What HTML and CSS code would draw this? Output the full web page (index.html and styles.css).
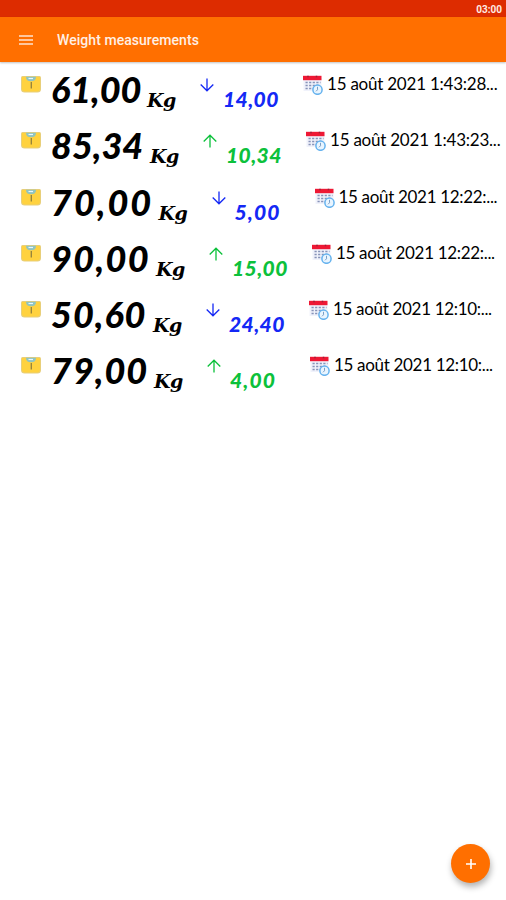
FILE: index.html
```
<!DOCTYPE html>
<html lang="en">
<head>
    <meta charset="UTF-8">
    <meta name="viewport" content="width=device-width, initial-scale=1.0">
    <title>Weight measurements</title>
    <link rel="stylesheet" href="styles.css">
</head>
<body>
    <svg class="sprite" aria-hidden="true">
        <symbol id="scale" viewBox="0 0 20 17">
            <path d="M1.500 0h17q1.500 0 1.500 1.500v11.500q0 3.500-3.500 3.500h-13Q0 16.500 0 13v-11.500Q0 0 1.500 0z" fill="#e8cf7a"/>
            <path d="M1 1h18v11.500q0 3-3 3h-12q-3 0-3-3z" fill="#ffd23f"/>
            <path d="M5 .8h10q0 4.500-5 4.500T5 .8z" fill="#8fc4c0"/>
            <path d="M7.500 2.500h4.500" stroke="#e8f6ff" stroke-width="1.200"/>
            <path d="M10.300 6v6.500" stroke="#92813d" stroke-width="1.300"/>
        </symbol>
        <symbol id="calendar" viewBox="0 0 20 20">
            <path d="M.5 3h18v13H.5z" fill="#f0f2fb"/>
            <path d="M0 .8h18.500v4.400H0z" fill="#ee1834"/>
            <path d="M5 .8v1.500M13.500 .8v1.500" stroke="#9b2038" stroke-width="1.500"/>
            <path d="M2.500 7.500h15M2.500 10.500h14M2.500 13.500h8" stroke="#8793b8" stroke-width="1.600" stroke-dasharray="2.200 1.400"/>
            <circle cx="14.500" cy="14.700" r="4.600" fill="#e9f5ff" stroke="#65b2ee" stroke-width="1.500"/>
            <path d="M14.500 11.800v3l-1.500 1.500" fill="none" stroke="#7a9ec5"/>
        </symbol>
        <symbol id="down" viewBox="0 0 14 14">
            <path d="M7 .5v12M.7 6.500L7 12.800l6.300-6.300" fill="none" stroke="currentColor" stroke-width="1.300"/>
        </symbol>
        <symbol id="up" viewBox="0 0 14 14">
            <path d="M7 13.500v-12M.7 7.500L7 1.200l6.300 6.300" fill="none" stroke="currentColor" stroke-width="1.300"/>
        </symbol>
    </svg>

    <div class="status">03:00</div>
    <header>
        <svg class="menu" viewBox="0 0 14 10"><path d="M0 1h14M0 5h14M0 9h14" stroke="#ffe3cf" stroke-width="1.700"/></svg>
        <h1>Weight measurements</h1>
    </header>

    <main>
        <div class="row first">
            <svg class="scale"><use href="#scale"/></svg>
            <span class="weight">61,00</span><span class="unit">Kg</span>
            <svg class="arrow loss"><use href="#down"/></svg>
            <span class="delta loss">14,00</span>
            <svg class="calendar"><use href="#calendar"/></svg>
            <span class="date">15 août 2021 1:43:28...</span>
        </div>
        <div class="row second">
            <svg class="scale"><use href="#scale"/></svg>
            <span class="weight">85,34</span><span class="unit">Kg</span>
            <svg class="arrow gain"><use href="#up"/></svg>
            <span class="delta gain">10,34</span>
            <svg class="calendar"><use href="#calendar"/></svg>
            <span class="date">15 août 2021 1:43:23...</span>
        </div>
        <div class="row third">
            <svg class="scale"><use href="#scale"/></svg>
            <span class="weight">70,00</span><span class="unit">Kg</span>
            <svg class="arrow loss"><use href="#down"/></svg>
            <span class="delta loss">5,00</span>
            <svg class="calendar"><use href="#calendar"/></svg>
            <span class="date">15 août 2021 12:22:...</span>
        </div>
        <div class="row fourth">
            <svg class="scale"><use href="#scale"/></svg>
            <span class="weight">90,00</span><span class="unit">Kg</span>
            <svg class="arrow gain"><use href="#up"/></svg>
            <span class="delta gain">15,00</span>
            <svg class="calendar"><use href="#calendar"/></svg>
            <span class="date">15 août 2021 12:22:...</span>
        </div>
        <div class="row fifth">
            <svg class="scale"><use href="#scale"/></svg>
            <span class="weight">50,60</span><span class="unit">Kg</span>
            <svg class="arrow loss"><use href="#down"/></svg>
            <span class="delta loss">24,40</span>
            <svg class="calendar"><use href="#calendar"/></svg>
            <span class="date">15 août 2021 12:10:...</span>
        </div>
        <div class="row sixth">
            <svg class="scale"><use href="#scale"/></svg>
            <span class="weight">79,00</span><span class="unit">Kg</span>
            <svg class="arrow gain"><use href="#up"/></svg>
            <span class="delta gain">4,00</span>
            <svg class="calendar"><use href="#calendar"/></svg>
            <span class="date">15 août 2021 12:10:...</span>
        </div>
    </main>

    <button class="add" aria-label="Add">
        <svg viewBox="0 0 12 12"><path d="M6 1v10M1 6h10" stroke="#fff" stroke-width="1.600"/></svg>
    </button>
</body>
</html>
```
FILE: styles.css
```
body {
    margin: 0;
    height: 900px;
    overflow: hidden;
    background: #fff;
    font-family: Lato, sans-serif;
}

.sprite {
    display: none;
}

.status {
    height: 17px;
    padding-right: 4px;
    background: #dd2c00;
    color: #ffe9e2;
    font: bold 10px/19px Roboto, sans-serif;
    text-align: right;
}

header {
    display: flex;
    align-items: center;
    height: 45px;
    padding-left: 19px;
    background: #ff6f00;
    box-shadow: 0 1px 2px rgba(0, 0, 0, 0.25);
}

.menu {
    width: 14px;
    height: 10px;
}

h1 {
    margin: 0 0 0 24px;
    color: #fff0e5;
    font: 500 14px/20px Roboto, sans-serif;
    letter-spacing: 0.05px;
}

main {
    padding: 9px 0 0 21px;
}

.row {
    display: flex;
    align-items: flex-start;
    height: 56.3px;
    white-space: nowrap;
}

.row > * {
    flex: none;
}

.scale {
    width: 20px;
    height: 17px;
    margin: 5px 10px 0 0;
}

.weight {
    width: 96px;
    margin-top: -2px;
    font: italic 900 36px/40px Lato, sans-serif;
}

.unit {
    width: 53px;
    margin-top: 16px;
    font: italic bold 19px/26px "DejaVu Serif", serif;
    letter-spacing: -0.6px;
}

.arrow {
    width: 14px;
    height: 14px;
    margin-top: 7px;
}

.delta {
    width: 80px;
    margin: 15px 0 0 9px;
    font: italic 900 21px/25px Lato, sans-serif;
    letter-spacing: 0.4px;
}

.loss {
    color: #1428f5;
}

.gain {
    color: #0cc13b;
}

.calendar {
    width: 20px;
    height: 20px;
    margin: 4px 4px 0 0;
}

.date {
    margin-top: 3px;
    font: 17px/20px Lato, sans-serif;
    letter-spacing: -0.23px;
}

/* the columns follow the width of each weight */
.second .weight {
    width: 99px;
}

.third .weight {
    width: 107.5px;
    letter-spacing: 2px;
}

.fourth .weight {
    width: 105px;
    letter-spacing: 1.4px;
}

.fifth .weight {
    width: 102px;
    letter-spacing: 1px;
}

.sixth .weight {
    width: 103px;
    letter-spacing: 1px;
}

.third .delta,
.sixth .delta {
    letter-spacing: 1.1px;
}

.third .date,
.fourth .date,
.fifth .date,
.sixth .date {
    letter-spacing: -0.32px;
}

.add {
    position: absolute;
    left: 451px;
    top: 844px;
    display: flex;
    align-items: center;
    justify-content: center;
    width: 39px;
    height: 39px;
    padding: 0;
    border: 0;
    border-radius: 50%;
    background: #ff6f00;
    box-shadow: 1px 4px 6px rgba(0, 0, 0, 0.3);
}

.add svg {
    width: 12px;
    height: 12px;
}
```
